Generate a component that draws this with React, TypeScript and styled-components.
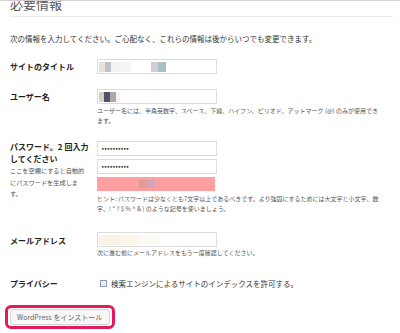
import React from 'react';
import styled, { createGlobalStyle } from 'styled-components';

const Global = createGlobalStyle`
    body {
        margin: 0;
        background: #ffffff;
        font-family: "Noto Sans CJK JP", "Noto Sans", sans-serif;
        color: #333;
    }
`

const Page = styled.div`
    border-top: 1px solid #d2d2d2;
    padding: 0 7px 0 10px;
    height: 332px;
    overflow: hidden;
`

const Heading = styled.h1`
    margin: -4px 0 0;
    font-size: 13px;
    line-height: 14px;
    font-weight: normal;
    color: #555;
    padding-bottom: 5px;
    border-bottom: 1px solid #ececec;
`

const Intro = styled.p`
    margin: 17px 0 0;
    font-size: 7.5px;
    line-height: 10px;
    color: #333;
`

const Row = styled.div<{ $top: number }>`
    display: grid;
    grid-template-columns: 87px 1fr;
    margin-top: ${p => p.$top}px;
`

const Label = styled.div<{ $pad?: number }>`
    font-size: 8px;
    line-height: 12px;
    font-weight: bold;
    color: #222;
    padding-top: ${p => p.$pad ?? 1}px;
`

const LabelNote = styled.div`
    font-size: 6.2px;
    line-height: 11.5px;
    font-weight: normal;
    color: #555;
    width: 76px;
`

const Field = styled.div`
    display: flex;
    flex-direction: column;
`

const Input = styled.div`
    box-sizing: border-box;
    width: 120px;
    height: 15px;
    border: 1px solid #dcdcdc;
    background: #fff;
    display: flex;
    align-items: center;
    padding-left: 1px;
    & + & {
        margin-top: 3px;
    }
`

const Block = styled.span<{ $c: string; $w: number; $h?: number }>`
    display: block;
    width: ${p => p.$w}px;
    height: ${p => p.$h ?? 10}px;
    background: ${p => p.$c};
`

const Dots = styled.span`
    font-family: "DejaVu Sans", sans-serif;
    font-size: 6px;
    letter-spacing: -0.8px;
    color: #222;
    padding-left: 2px;
`

const Strength = styled.div`
    width: 118px;
    height: 14px;
    margin-top: 3px;
    background: #ffa0a0;
    display: flex;
    align-items: center;
    padding-left: 42px;
    box-sizing: border-box;
`

const Help = styled.div<{ $top?: number }>`
    font-size: 6px;
    line-height: 9.5px;
    color: #555;
    margin-top: ${p => p.$top ?? 2}px;
    padding-right: 14px;
`

const Check = styled.label`
    display: flex;
    align-items: center;
    font-size: 7.5px;
    color: #333;
    padding-top: 2px;
    padding-left: 3px;
`

const Box = styled.span`
    box-sizing: border-box;
    width: 7px;
    height: 7px;
    border: 1px solid #8a99b2;
    background: #eef0f6;
    margin-right: 4px;
`

const Highlight = styled.div`
    display: inline-block;
    margin: 15px 0 0 -5px;
    border: 3px solid #e3195b;
    border-radius: 6px;
    padding: 1px 2px;
`

const Button = styled.div`
    box-sizing: border-box;
    width: 100px;
    height: 16px;
    background: #f6f6f6;
    border: 1px solid #d4d4d4;
    border-radius: 3px;
    font-size: 7px;
    line-height: 14px;
    font-weight: normal;
    color: #666;
    padding-left: 6px;
`

const App = () => {
    return (
        <Page>
            <Global />
            <Heading>必要情報</Heading>
            <Intro>次の情報を入力してください。ご心配なく、これらの情報は後からいつでも変更できます。</Intro>

            <Row $top={15}>
                <Label $pad={2}>サイトのタイトル</Label>
                <Field>
                    <Input>
                        <Block $c="#e8e2da" $w={6} />
                        <Block $c="#c2c2c6" $w={6} />
                        <Block $c="#f3f3f3" $w={10} />
                        <Block $c="#f6f6f6" $w={10} />
                        <Block $c="#ffffff" $w={20} />
                        <Block $c="#cfcfd2" $w={7} />
                        <Block $c="#a9c0c5" $w={8} />
                    </Input>
                </Field>
            </Row>

            <Row $top={15}>
                <Label $pad={2}>ユーザー名</Label>
                <Field>
                    <Input>
                        <Block $c="#d2d2c2" $w={5} />
                        <Block $c="#555068" $w={6} />
                        <Block $c="#aaaaaa" $w={6} />
                        <Block $c="#f6eef0" $w={4} />
                    </Input>
                    <Help>ユーザー名には、半角英数字、スペース、下線、ハイフン、ピリオド、アットマーク (@) のみが使用でき<br />ます。</Help>
                </Field>
            </Row>

            <Row $top={16}>
                <div>
                    <Label $pad={0}>パスワード。2 回入力<br />してください</Label>
                    <LabelNote>ここを空欄にすると自動的にパスワードを生成します。</LabelNote>
                </div>
                <Field>
                    <Input><Dots>••••••••••</Dots></Input>
                    <Input><Dots>••••••••••</Dots></Input>
                    <Strength>
                        <Block $c="#e29a9a" $w={7} $h={8} />
                        <Block $c="#d8a2b2" $w={8} $h={8} />
                        <Block $c="#eda2aa" $w={6} $h={8} />
                    </Strength>
                    <Help $top={3}>ヒント: パスワードは少なくとも7文字以上であるべきです。より強固にするためには大文字と小文字、数字、! " ? $ % ^ &amp; ) のような記号を使いましょう。</Help>
                </Field>
            </Row>

            <Row $top={19}>
                <Label $pad={3}>メールアドレス</Label>
                <Field>
                    <Input>
                        <Block $c="#f6f2e4" $w={20} />
                        <Block $c="#faf6ea" $w={20} />
                        <Block $c="#fbfbf6" $w={20} />
                    </Input>
                    <Help $top={1}>次に進む前にメールアドレスをもう一度確認してください。</Help>
                </Field>
            </Row>

            <Row $top={18}>
                <Label $pad={2}>プライバシー</Label>
                <Check><Box />検索エンジンによるサイトのインデックスを許可する。</Check>
            </Row>

            <Highlight>
                <Button>WordPress をインストール</Button>
            </Highlight>
        </Page>
    )
};

export default App
